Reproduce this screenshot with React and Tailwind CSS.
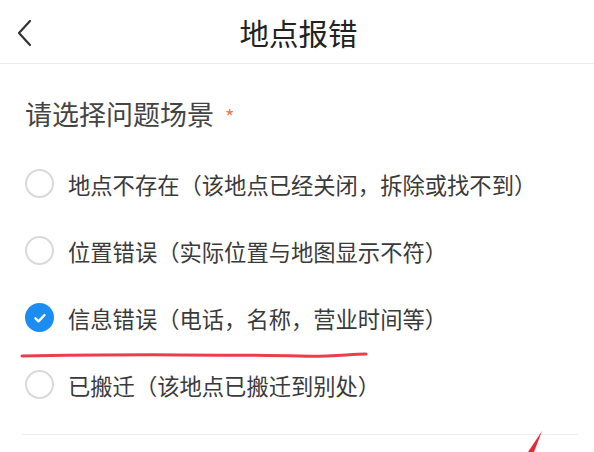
import React, { useState } from "react";

const FONT = { fontFamily: '"Noto Sans CJK SC", "Noto Sans", sans-serif' };

const OPTIONS = [
  "地点不存在（该地点已经关闭，拆除或找不到）",
  "位置错误（实际位置与地图显示不符）",
  "信息错误（电话，名称，营业时间等）",
  "已搬迁（该地点已搬迁到别处）",
];

function Radio({ checked }) {
  if (checked) {
    return (
      <span className="w-[29px] h-[29px] shrink-0 rounded-full bg-[#1b8cf2] flex items-center justify-center">
        <svg width="16" height="16" viewBox="0 0 16 16" fill="none">
          <path d="M3.5 8.3l3 3 6-6.3" stroke="#fff" strokeWidth="2.4" strokeLinecap="round" strokeLinejoin="round" />
        </svg>
      </span>
    );
  }
  return <span className="w-[29px] h-[29px] shrink-0 rounded-full border-2 border-[#d9d9d9] bg-white" />;
}

export default function App() {
  const [picked, setPicked] = useState(2);

  return (
    <div className="relative w-[594px] h-[452px] bg-white overflow-hidden text-[#333]" style={FONT}>
      <div className="h-[64px] grid grid-cols-[60px_1fr_60px] items-center border-b border-[#ececec]">
        <div className="pl-[15px] pt-[2px]">
          <svg width="22" height="28" viewBox="0 0 22 28" fill="none">
            <path d="M15 2L4 14l11 12" stroke="#333" strokeWidth="2.2" strokeLinecap="round" strokeLinejoin="round" />
          </svg>
        </div>
        <div className="text-center text-[29.5px] leading-[36px] text-[#222] pl-[3px]">地点报错</div>
        <div />
      </div>

      <div className="px-[25px]">
        <div className="pt-[32px] h-[68px] text-[27px] leading-[36px] text-[#444] flex items-baseline">
          请选择问题场景
          <span className="ml-[11px] text-[#f07850] text-[20px] leading-[20px]">*</span>
        </div>
        <div className="mt-[18px]">
          {OPTIONS.map((t, i) => (
            <div
              key={t}
              onClick={() => setPicked(i)}
              className="h-[67px] flex items-center gap-[14px] cursor-pointer"
            >
              <Radio checked={picked === i} />
              <span className="text-[22.3px] leading-[30px] text-[#3a3a3a]">{t}</span>
            </div>
          ))}
        </div>
        <div className="mt-[16px] border-t border-[#eeeeee] mr-[-9px] ml-[-3px]" />
      </div>

      <svg className="absolute inset-0 pointer-events-none" width="594" height="452" viewBox="0 0 594 452">
        <path d="M22 356 C120 354 250 355 300 356 C330 357 350 354 366 354" stroke="#e8283a" strokeWidth="3" strokeLinecap="round" fill="none" opacity="0.9" />
        <path d="M542 431 L528 452 L534 452 Z" fill="#e8283a" />
      </svg>
    </div>
  );
}
